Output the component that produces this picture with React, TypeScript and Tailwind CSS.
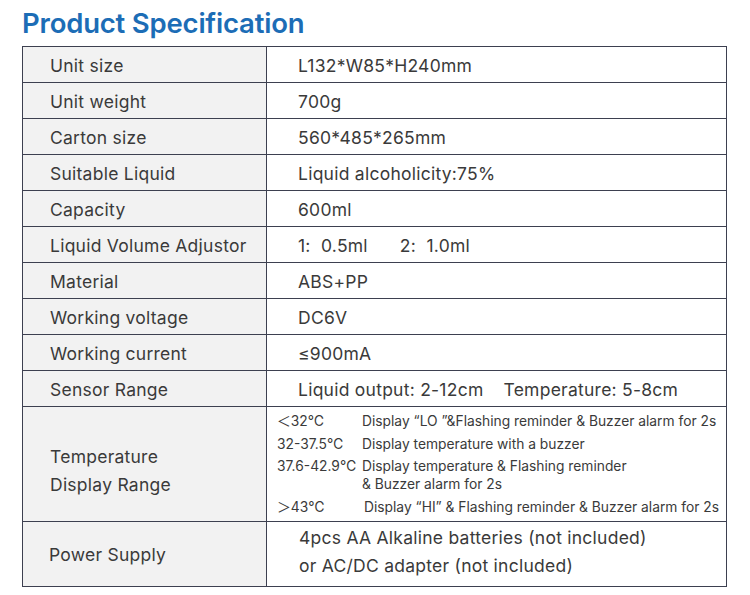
const rows: [string, React.ReactNode][] = [
  ["Unit size", "L132*W85*H240mm"],
  ["Unit weight", "700g"],
  ["Carton size", "560*485*265mm"],
  ["Suitable Liquid", "Liquid alcoholicity:75%"],
  ["Capacity", "600ml"],
  [
    "Liquid Volume Adjustor",
    <span>
      1:&nbsp; 0.5ml<span className="inline-block w-[32px]" />2:&nbsp; 1.0ml
    </span>,
  ],
  ["Material", "ABS+PP"],
  ["Working voltage", "DC6V"],
  ["Working current", "≤900mA"],
  [
    "Sensor Range",
    <span>
      Liquid output: 2-12cm<span className="inline-block w-[20px]" />Temperature: 5-8cm
    </span>,
  ],
];

const temps: [string, string[], boolean][] = [
  ["＜32℃", ["Display “LO ”&Flashing reminder & Buzzer alarm for 2s"], false],
  ["32-37.5℃", ["Display temperature with a buzzer"], false],
  ["37.6-42.9℃", ["Display temperature & Flashing reminder", "& Buzzer alarm for 2s"], false],
  ["＞43℃", ["Display “HI” & Flashing reminder & Buzzer alarm for 2s"], true],
];

export default function App() {
  return (
    <div
      className="w-[750px] h-[595px] bg-white pl-[22px] pt-[4px] text-[#3a3a3a]"
      style={{ fontFamily: "Inter, 'Noto Sans', 'Noto Sans CJK SC', sans-serif" }}
    >
      <h1 className="text-[27.5px] leading-[38px] font-semibold tracking-[-0.2px] text-[#1c6db6]">
        Product Specification
      </h1>
      <div className="mt-[4px] w-[705px] border-[1.5px] border-[#3d4050] text-[17.5px] tracking-[0.25px]">
        {rows.map(([label, value]) => (
          <div key={label} className="flex h-[36px] border-b-[1.5px] border-[#3d4050]">
            <div className="w-[244px] shrink-0 bg-[#f2f2f2] border-r-[1.5px] border-[#3d4050] pl-[27px] pt-[3px] flex items-center">
              {label}
            </div>
            <div className="flex-1 pl-[31px] pt-[3px] flex items-center">{value}</div>
          </div>
        ))}
        <div className="flex h-[115px] border-b-[1.5px] border-[#3d4050]">
          <div className="w-[244px] shrink-0 bg-[#f2f2f2] border-r-[1.5px] border-[#3d4050] pl-[27px] flex flex-col justify-center leading-[28px] pt-[14px]">
            <div>Temperature</div>
            <div>Display Range</div>
          </div>
          <div className="flex-1 pl-[10px] pt-[5px] flex flex-col gap-[4.5px] text-[13.8px] leading-[18px] tracking-[0px]">
            {temps.map(([range, lines, shifted]) => (
              <div key={range} className="flex">
                <div className="w-[85px] shrink-0">{range}</div>
                <div className={shifted ? "pl-[2px]" : ""}>
                  {lines.map((l) => (
                    <div key={l} className="whitespace-pre">{l}</div>
                  ))}
                </div>
              </div>
            ))}
          </div>
        </div>
        <div className="flex h-[64px]">
          <div className="w-[244px] shrink-0 bg-[#f2f2f2] border-r-[1.5px] border-[#3d4050] pl-[26px] pt-[2px] flex items-center">
            Power Supply
          </div>
          <div className="flex-1 pl-[32px] flex flex-col justify-center leading-[28px] pb-[4px]">
            <div>4pcs AA Alkaline batteries (not included)</div>
            <div>or AC/DC adapter (not included)</div>
          </div>
        </div>
      </div>
    </div>
  );
}
